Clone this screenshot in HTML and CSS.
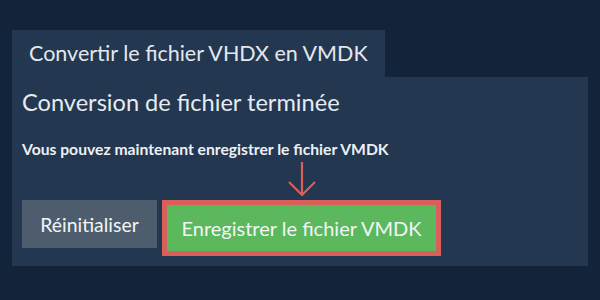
FILE: index.html
```html
<!DOCTYPE html>
<html>
<head>
  <meta charset="UTF-8">
  <title>VHDX en VMDK</title>
  <link rel="stylesheet" href="styles.css">
</head>
<body>
  <div class="page">
    <div class="tab">Convertir le fichier VHDX en VMDK</div>
    <div class="panel">
      <h2 class="title">Conversion de fichier terminée</h2>
      <p class="note">Vous pouvez maintenant enregistrer le fichier VMDK</p>
      <div class="actions">
        <button class="reset-btn">Réinitialiser</button>
        <div class="save-wrap">
          <svg class="arrow" width="30" height="36" viewBox="0 0 30 36">
            <path d="M15 1 V34 M2 21 L15 34 L28 21" fill="none" stroke="#d9605a" stroke-width="2.2"/>
          </svg>
          <button class="save-btn">Enregistrer le fichier VMDK</button>
        </div>
      </div>
    </div>
  </div>
</body>
</html>
```

FILE: styles.css
```css
* {
  margin: 0;
  padding: 0;
  box-sizing: border-box;
}

body {
  font-family: Lato, 'Open Sans', sans-serif;
  background: #13233a;
  color: #e8edf2;
}

.page {
  padding: 30px 12px 0 12px;
}

.tab {
  display: inline-block;
  background: #233750;
  font-size: 21.5px;
  line-height: 47px;
  height: 47px;
  padding: 0 17px 0 17px;
  color: #e3e8ee;
}

.panel {
  background: #233750;
  padding: 10px 10px 0 10px;
  height: 189px;
}

.title {
  font-size: 23.6px;
  font-weight: 400;
  line-height: 30px;
  color: #e6ebf0;
}

.note {
  font-size: 15.7px;
  font-weight: 700;
  line-height: 20px;
  margin-top: 22px;
  color: #edf1f5;
}

.actions {
  display: flex;
  align-items: flex-start;
  gap: 5px;
  margin-top: 41px;
}

button {
  font-family: Lato, 'Open Sans', sans-serif;
  border: none;
  color: #f2f5f8;
}

.reset-btn {
  background: #4e5d6e;
  width: 135px;
  height: 48px;
  font-size: 19.4px;
}

.save-wrap {
  position: relative;
}

.arrow {
  position: absolute;
  left: 125px;
  top: -39px;
}

.save-btn {
  background: #5cb85c;
  border: 5px solid #d9605a;
  width: 279px;
  height: 56px;
  font-size: 20px;
}
```
